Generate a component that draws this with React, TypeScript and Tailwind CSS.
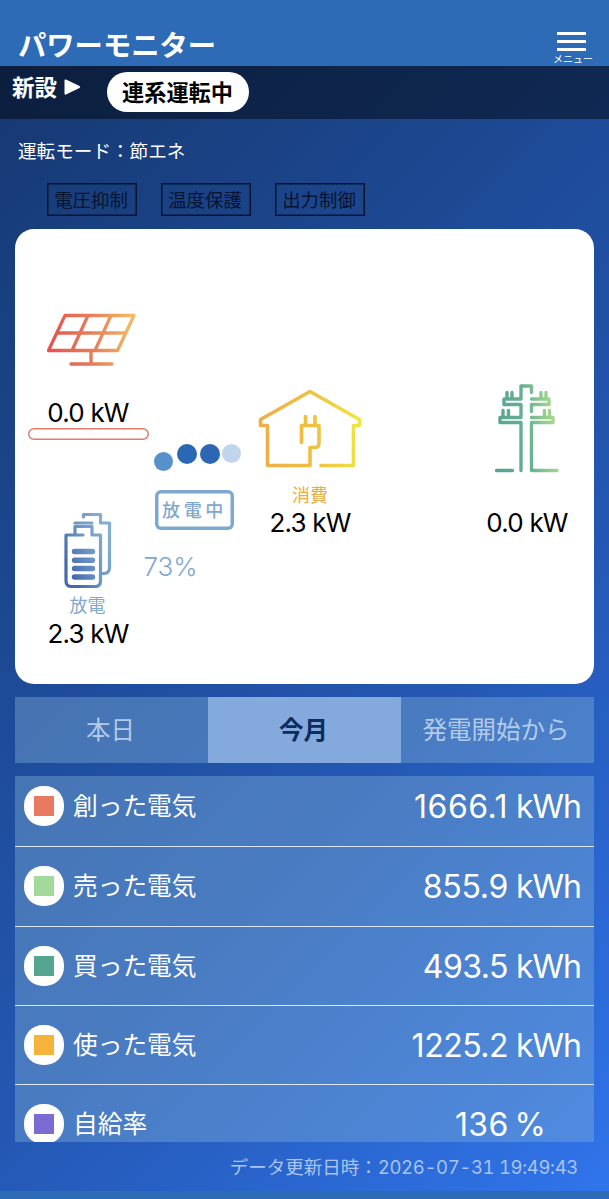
import React from "react";

const rows = [
  { label: "創った電気", value: "1666.1", swatch: "bg-[#e87a62]", height: "h-[71px] pb-[10px]", digits: "tracking-[0.500px]" },
  { label: "売った電気", value: "855.9", swatch: "bg-[#a3d99b]", height: "h-[80px] pb-[1px]", digits: "tracking-[-0.300px]" },
  { label: "買った電気", value: "493.5", swatch: "bg-[#55a591]", height: "h-[79px]", digits: "tracking-[-0.500px]" },
  { label: "使った電気", value: "1225.2", swatch: "bg-[#f5b33b]", height: "h-[79px]", digits: "tracking-[-0.500px]" },
];

function RowLabel({ label, swatch }: { label: string; swatch: string }) {
  return (
    <div className="flex items-center">
      <span className="flex size-10 items-center justify-center rounded-[19px] bg-white">
        <span className={`size-5 ${swatch}`} />
      </span>
      <span className="ml-[9px] pt-px text-[24.7px] leading-none">{label}</span>
    </div>
  );
}

function Power({ children }: { children: React.ReactNode }) {
  return (
    <div className="flex h-[28px] items-center justify-center whitespace-nowrap text-[26px] leading-none tracking-[-0.8px] text-black">
      {children}
    </div>
  );
}

function SolarIcon() {
  return (
    <svg className="h-[56px] w-[92px]" viewBox="0 0 92 56" fill="none" stroke="url(#solar)" strokeWidth="3.300" strokeLinecap="round" strokeLinejoin="round">
      <defs>
        <linearGradient id="solar" gradientUnits="userSpaceOnUse" x1="2" y1="20" x2="90" y2="12">
          <stop stopColor="#e5524f" />
          <stop offset="0.5" stopColor="#e57d5c" />
          <stop offset="1" stopColor="#f4bd65" />
        </linearGradient>
      </defs>
      <path d="M20 3.500H89L72.500 38.500H3.500ZM43 3.500L27 38.500M66 3.500L50 38.500M12 21H81M46 39V51.500M26 52H67" />
    </svg>
  );
}

function BatteryIcon() {
  return (
    <svg className="h-[78px] w-[50px]" viewBox="0 0 50 78" fill="none" stroke="url(#battery)" strokeWidth="3.200" strokeLinecap="round" strokeLinejoin="round">
      <defs>
        <linearGradient id="battery" gradientUnits="userSpaceOnUse" x1="3" y1="50" x2="48" y2="30">
          <stop stopColor="#4668ac" />
          <stop offset="0.55" stopColor="#6d98c6" />
          <stop offset="1" stopColor="#86add2" />
        </linearGradient>
      </defs>
      <path d="M13 12H30M21.500 6V3.500H38.500V12H47.500V57Q47.500 62.500 41 62.500M21 24H13V15.500H30V24H38.500V70Q38.500 75.500 33 75.500H9.500Q4 75.500 4 70V24H21" />
      <path strokeWidth="5.400" d="M12.500 40.500H30.500M12.500 49.200H30.500M12.500 57.500H30.500M12.500 66H30.500" />
    </svg>
  );
}

function HouseIcon() {
  return (
    <svg className="h-[82px] w-[106px]" viewBox="0 0 106 82" fill="none" stroke="url(#house)" strokeWidth="3.600" strokeLinecap="round" strokeLinejoin="round">
      <defs>
        <linearGradient id="house" gradientUnits="userSpaceOnUse" x1="3" y1="50" x2="103" y2="40">
          <stop stopColor="#efad49" />
          <stop offset="0.55" stopColor="#efc13f" />
          <stop offset="1" stopColor="#f0e544" />
        </linearGradient>
      </defs>
      <path d="M53 78.500H10.500V38.500H3.500V32.500L53 4.500L102.500 32.500V38.500H96.500V78.500H64M53 78.500V60.500H57.500Q62 60.500 62 56V38.500H44.500V55.500M48.500 38V29.500M58 38V29.500" />
    </svg>
  );
}

function PoleIcon() {
  return (
    <svg className="h-[90px] w-[66px]" viewBox="0 0 66 90" fill="none" stroke="url(#pole)" strokeWidth="3.400" strokeLinecap="round" strokeLinejoin="round">
      <defs>
        <linearGradient id="pole" gradientUnits="userSpaceOnUse" x1="3" y1="50" x2="63" y2="44">
          <stop stopColor="#55a392" />
          <stop offset="0.52" stopColor="#68b094" />
          <stop offset="1" stopColor="#a9db8c" />
        </linearGradient>
      </defs>
      <path d="M3.500 87.500H19.500M28 87.500V39.500H7V34.500H28V21.500H11V16H28V3H38.500V9.500M38.500 16H56V21.500H38.500V28.500M38.500 34.500H60V39.500H38.500V87.500H64M14 15V9.500M19 15V9.500M48 15V9.500M53 15V9.500M10 33.500V27.500M15.500 33.500V27.500M51.500 33.500V27.500M56.500 33.500V27.500" />
    </svg>
  );
}

export default function App() {
  return (
    <div className="flex h-[1199px] w-[609px] flex-col overflow-hidden bg-[linear-gradient(135deg,#15366d_0%,#1c478f_32%,#2458b4_64%,#3075ec_100%)] font-['Inter','Noto_Sans_CJK_JP',sans-serif] text-white">
      <header className="flex h-[66px] shrink-0 justify-between bg-[#2d6bb6] pr-4 pl-[18px]">
        <h1 className="pt-[31px] text-[28.300px] leading-[30px] font-bold">パワーモニター</h1>
        <div className="flex flex-col items-center pt-8">
          <div className="mr-[3px] flex w-[29px] flex-col gap-[5px]">
            <span className="h-[3px] bg-white" />
            <span className="h-[3px] bg-white" />
            <span className="h-[3px] bg-white" />
          </div>
          <span className="mt-[3px] text-[10px] leading-[10px]">メニュー</span>
        </div>
      </header>

      <div className="flex h-[53px] shrink-0 items-start bg-black/45 pt-[6px] pl-3">
        <span className="pt-[4px] text-[22.500px] leading-[24px] font-bold">新設</span>
        <svg className="mt-[7px] ml-[7px] h-4 w-[17px]" viewBox="0 0 17 16" fill="white">
          <path d="M.5 1.500Q.5 0 2 .5L15.500 7Q17 8 15.500 9L2 15.500Q.5 16 .5 14.500Z" />
        </svg>
        <span className="ml-[26px] flex h-10 w-[142px] items-center justify-center rounded-full bg-white pt-[2px] pr-[1px] text-[22.200px] leading-none font-bold text-black">連系運転中</span>
      </div>

      <p className="mt-[22px] ml-[18px] h-5 shrink-0 text-[18.600px] leading-5">運転モード：節エネ</p>

      <div className="mt-[22px] ml-[47px] flex h-[33px] shrink-0 gap-6 text-[18.400px] leading-none text-[#07132f]">
        {["電圧抑制", "温度保護", "出力制御"].map((t) => (
          <span key={t} className="flex w-[90px] items-center justify-center pt-px pr-[2px] ring-[1.500px] ring-[#07132f] ring-inset">{t}</span>
        ))}
      </div>

      <section className="mx-[15px] mt-[13px] flex h-[455px] shrink-0 rounded-[19px] bg-white">
        <div className="ml-[13px] flex w-[121px] flex-col items-center">
          <div className="mt-[83px] ml-[5px]"><SolarIcon /></div>
          <div className="mt-[31px] mr-[1px]"><Power>0.0 kW</Power></div>
          <div className="mt-[1px] h-3 w-[121px] rounded-full ring-[1.500px] ring-[#e27a6d] ring-inset" />
          <div className="mt-[71px] mr-[4px]"><BatteryIcon /></div>
          <div className="mt-[7px] mr-[2px] text-[18px] leading-[20px] text-[#80a8cf]">放電</div>
          <div className="mt-[4px] mr-[1px]"><Power>2.3 kW</Power></div>
        </div>

        <div className="flex w-[90px] flex-col items-center pt-[215px]">
          <div className="ml-[8px] flex h-[28px] w-[88px] items-start">
            <span className="mt-[8px] size-[19px] shrink-0 rounded-full bg-[#5791cc]" />
            <span className="ml-[4px] size-[20px] shrink-0 rounded-full bg-[#2b67b3]" />
            <span className="ml-[3px] size-[20px] shrink-0 rounded-full bg-[#2b67b3]" />
            <span className="ml-[2px] size-[19px] shrink-0 rounded-full bg-[#c0d5ec]" />
          </div>
          <div className="mt-[18px] flex h-[40px] w-[79px] items-center justify-center rounded-[6px] pt-px pl-[1px] text-[18px] leading-none font-medium tracking-[3.600px] text-[#80a8cf] ring-[3.500px] ring-[#80a8cf] ring-inset">放電中</div>
          <div className="mt-[23px] mr-[51px] w-[50px] text-[26px] leading-[28px] font-light text-[#80a8cf]">73%</div>
        </div>

        <div className="flex w-[142px] flex-col items-center pt-[158px]">
          <HouseIcon />
          <div className="mt-[17px] text-[18px] leading-[20px] text-[#ecad43]">消費</div>
          <div className="mt-[3px]"><Power>2.3 kW</Power></div>
        </div>

        <div className="ml-[92px] flex w-[108px] flex-col items-center pt-[154px]">
          <div className="mr-[2px]"><PoleIcon /></div>
          <div className="mt-[36px]"><Power>0.0 kW</Power></div>
        </div>
      </section>

      <nav className="mx-[15px] mt-[13px] grid h-[66px] shrink-0 grid-cols-3 text-[24.500px] leading-none">
        <button className="bg-[#83b2d6]/40 pr-[2px] text-[#b3cbe9]">本日</button>
        <button className="bg-[#84aadd] pr-[2px] font-bold text-[#0d2c60]">今月</button>
        <button className="bg-[#83b2d6]/40 pr-[3px] text-[#b3cbe9]">発電開始から</button>
      </nav>

      <section className="mx-[15px] mt-[13px] flex h-[366px] shrink-0 flex-col overflow-hidden bg-[#83b2d6]/40">
        {rows.map((r) => (
          <div key={r.label} className={`flex shrink-0 items-center justify-between border-b border-[#dce8f5] pr-[13px] pl-[9px] ${r.height}`}>
            <RowLabel label={r.label} swatch={r.swatch} />
            <span className="flex gap-[8px] pt-[2px] text-[32px] leading-none">
              <span className={r.digits}>{r.value}</span>
              <span className="tracking-[-1px]">kWh</span>
            </span>
          </div>
        ))}
        <div className="flex h-[77px] shrink-0 items-center justify-between pr-[48px] pl-[9px]">
          <RowLabel label="自給率" swatch="bg-[#7d6bd4]" />
          <span className="flex gap-[6px] pt-[2px] text-[32px] leading-none">
            <span className="tracking-[0.300px]">136</span>
            <span>%</span>
          </span>
        </div>
      </section>

      <footer className="flex flex-1 flex-col justify-between">
        <p className="mt-[15px] mr-[31px] text-right text-[18.500px] leading-[20px] whitespace-nowrap text-[#a9c4f0]">
          データ更新日時：<span className="tracking-[-0.350px] tabular-nums">2026-07-31 19:49:43</span>
        </p>
        <div className="h-2 bg-[#2d6bb6]" />
      </footer>
    </div>
  );
}
